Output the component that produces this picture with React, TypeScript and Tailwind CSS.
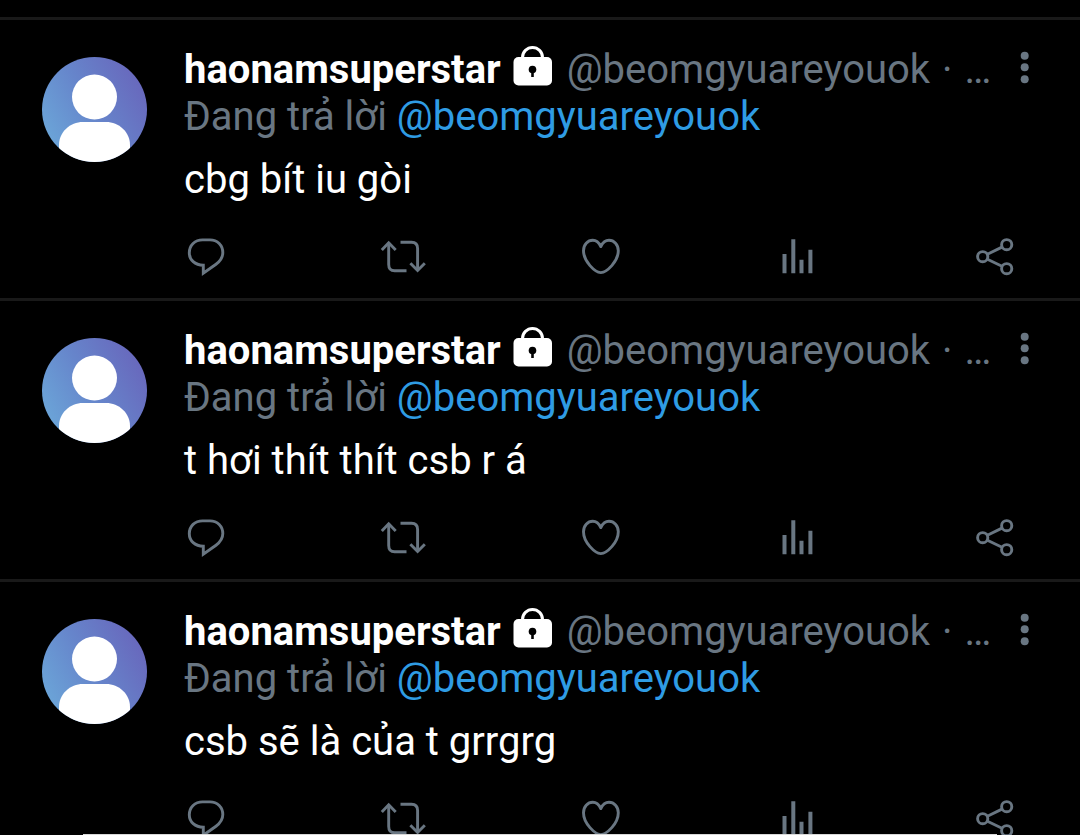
import type { ReactNode } from "react";

interface Tweet {
  id: number;
  text: string;
}

const tweets: Tweet[] = [
  { id: 1, text: "cbg bít iu gòi" },
  { id: 2, text: "t hơi thít thít csb r á" },
  { id: 3, text: "csb sẽ là của t grrgrg" },
];

const Avatar = ({ id }: { id: number }) => (
  <svg viewBox="0 0 105 105" className="w-[105px] h-[105px] shrink-0">
    <defs>
      <linearGradient id={`sky-${id}`} x1="0" y1="0.7" x2="0.9" y2="0.2">
        <stop offset="0" stopColor="#6ba5d8" />
        <stop offset="0.5" stopColor="#6685cb" />
        <stop offset="1" stopColor="#6869bd" />
      </linearGradient>
      <clipPath id={`round-${id}`}>
        <circle cx="52.5" cy="52.5" r="52.5" />
      </clipPath>
    </defs>
    <g clipPath={`url(#round-${id})`}>
      <rect width="105" height="105" fill={`url(#sky-${id})`} />
      <circle cx="52.5" cy="40" r="22.5" fill="#fff" />
      <path
        d="M17 105V88C17 75 28 65 41 65H64C77 65 88 75 88 88V105Z"
        fill="#fff"
      />
    </g>
  </svg>
);

const LockIcon = () => (
  <svg viewBox="0 0 40 40" className="w-10 h-10 shrink-0" aria-label="Protected">
    <path
      d="M9.5 13V11.5a10 10 0 0 1 20 0V13"
      fill="none"
      stroke="#fff"
      strokeWidth="3"
    />
    <rect x="0.5" y="11" width="38.5" height="28.5" rx="5" fill="#fff" />
    <circle cx="19.5" cy="23.5" r="3.8" fill="#000" />
    <path d="M18.2 25H20.8V31H18.2Z" fill="#000" />
  </svg>
);

interface ActionProps {
  label: string;
  children: ReactNode;
}

const Action = ({ label, children }: ActionProps) => (
  <button type="button" aria-label={label} className="w-11 h-11">
    <svg
      viewBox="0 0 44 44"
      className="w-11 h-11 overflow-visible"
      fill="none"
      stroke="currentColor"
      strokeWidth="2.9"
    >
      {children}
    </svg>
  </button>
);

const Actions = () => (
  <div className="flex justify-between mt-8 pr-[63px]">
    <Action label="Reply">
      <path d="M19.3 38.3V30.2C11 30.2 5.3 25 5.3 17.8C5.3 10 11 4.9 18.5 4.9H26C33.5 4.9 38.8 10.5 38.8 17.6C38.8 22.5 36.5 26 32 29.2Z" />
    </Action>
    <Action label="Retweet">
      <path d="M7.7 7.8V29.5C7.7 33.5 9.7 35.8 13.7 35.8H25.5" />
      <path d="M0.8 15L7.7 7.8L14.7 15" />
      <path d="M19.5 7.3H30.5C34.5 7.3 36.6 9.5 36.6 13.5V35.3" />
      <path d="M29.4 28.3L36.6 35.5L43.8 28.3" />
    </Action>
    <Action label="Like">
      <path
        d="M21.8 37.6C16 37.3 4.5 26.5 4.5 15.7C4.5 9.6 8.7 5.3 13.8 5.3C17.5 5.3 20 7.8 21.8 11.6C23.6 7.8 26.2 5.3 30 5.3C35 5.3 39.3 9.6 39.3 15.7C39.3 26.5 27.8 37.3 21.8 37.6Z"
        strokeLinejoin="round"
      />
    </Action>
    <Action label="View activity">
      <path
        d="M8.5 19V38.3M17.3 4.3V38.3M25.5 24.7V38.3M34.4 14.7V38.3"
        strokeWidth="4"
      />
    </Action>
    <Action label="Share">
      <circle cx="9.7" cy="21.7" r="5.1" />
      <circle cx="33.7" cy="9.7" r="5.1" />
      <circle cx="33.7" cy="33.7" r="5.1" />
      <path d="M14.4 19.2L29 12.1M14.4 24.2L29 31.3" />
    </Action>
  </div>
);

const TweetCard = ({ tweet }: { tweet: Tweet }) => (
  <article className="flex shrink-0 border-t-[3px] border-[#191919] pt-[26px] pb-[19px] pl-[42px] leading-[47px]">
    <div className="mt-[11px]">
      <Avatar id={tweet.id} />
    </div>

    <div className="flex-1 min-w-0 ml-[37px]">
      {/* Name, handle and menu */}
      <header className="flex h-[47px] pr-[43px]">
        <div className="flex flex-1 min-w-0">
          <span className="font-bold text-white">haonamsuperstar</span>
          <span className="ml-3">
            <LockIcon />
          </span>
          <span className="ml-3.5">@beomgyuareyouok</span>
          <span className="ml-3">·</span>
          <span className="ml-3">…</span>
        </div>
        <button type="button" aria-label="More" className="w-6 h-11">
          <svg viewBox="0 0 24 44" className="w-6 h-11" fill="currentColor">
            <circle cx="11.7" cy="9.7" r="4" />
            <circle cx="11.7" cy="21.3" r="4" />
            <circle cx="11.7" cy="33.3" r="4" />
          </svg>
        </button>
      </header>

      <p>
        Đang trả lời{" "}
        <a href="#" className="text-[#2f9ce4]">
          @beomgyuareyouok
        </a>
      </p>
      <p className="mt-4 text-white">{tweet.text}</p>

      <Actions />
    </div>
  </article>
);

const App = () => {
  return (
    <main className="relative flex flex-col h-screen overflow-hidden bg-black pt-[17px] font-[Roboto,sans-serif] text-[40px] text-[#697682]">
      {tweets.map((tweet) => (
        <TweetCard key={tweet.id} tweet={tweet} />
      ))}

      {/* Top edge of the sheet below the feed */}
      <div className="absolute bottom-0 inset-x-[83px] h-px bg-[#d8d8d8]" />
    </main>
  );
};

export default App;
